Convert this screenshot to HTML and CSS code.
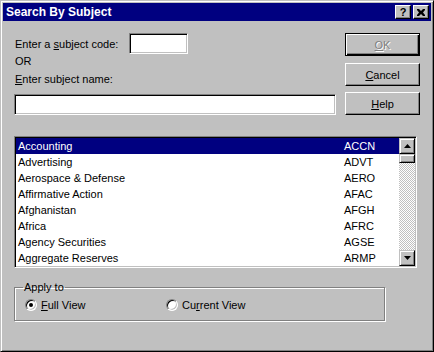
FILE: index.html
```html
<!DOCTYPE html>
<html lang="en">
<head>
    <meta charset="UTF-8">
    <title>Search By Subject</title>
    <link rel="stylesheet" href="styles.css">
</head>
<body>
    <div class="window">
        <div class="titlebar">
            <span class="title">Search By Subject</span>
            <div class="title-buttons">
                <span class="tbtn help-q">?</span>
                <span class="tbtn">
                    <svg width="8" height="7" viewBox="0 0 8 7"><path d="M0 0h2l2 2 2-2h2v1L6 3.5 8 6v1H6L4 5 2 7H0V6l2-2.5L0 1z" fill="#000"/></svg>
                </span>
            </div>
        </div>

        <div class="content">
            <div class="top">
                <div class="fields">
                    <div class="code-row">
                        <span class="code-label">Enter a <u>s</u>ubject code:</span>
                        <div class="input code-input"></div>
                    </div>
                    <div class="or">OR</div>
                    <div class="name-label"><u>E</u>nter subject name:</div>
                    <div class="input name-input"></div>
                </div>
                <div class="buttons">
                    <div class="btn default disabled"><span><u>O</u>K</span></div>
                    <div class="btn cancel"><span><u>C</u>ancel</span></div>
                    <div class="btn help"><span><u>H</u>elp</span></div>
                </div>
            </div>

            <div class="listbox">
                <div class="items">
                    <div class="row selected"><span class="name">Accounting</span><span>ACCN</span></div>
                    <div class="row"><span class="name">Advertising</span><span>ADVT</span></div>
                    <div class="row"><span class="name">Aerospace &amp; Defense</span><span>AERO</span></div>
                    <div class="row"><span class="name">Affirmative Action</span><span>AFAC</span></div>
                    <div class="row"><span class="name">Afghanistan</span><span>AFGH</span></div>
                    <div class="row"><span class="name">Africa</span><span>AFRC</span></div>
                    <div class="row"><span class="name">Agency Securities</span><span>AGSE</span></div>
                    <div class="row"><span class="name">Aggregate Reserves</span><span>ARMP</span></div>
                </div>
                <div class="scrollbar">
                    <div class="sbtn">
                        <svg width="7" height="4" viewBox="0 0 7 4"><path d="M3.5 0L7 4H0z" fill="#000"/></svg>
                    </div>
                    <div class="thumb"></div>
                    <div class="track"></div>
                    <div class="sbtn">
                        <svg width="7" height="4" viewBox="0 0 7 4"><path d="M0 0h7L3.5 4z" fill="#000"/></svg>
                    </div>
                </div>
            </div>

            <fieldset class="group">
                <legend>Apply to</legend>
                <div class="radios">
                    <div class="radio-item full">
                        <span class="radio checked"></span>
                        <span><u>F</u>ull View</span>
                    </div>
                    <div class="radio-item">
                        <span class="radio"></span>
                        <span>Cu<u>r</u>rent View</span>
                    </div>
                </div>
            </fieldset>
        </div>
    </div>
</body>
</html>
```

FILE: styles.css
```css
body {
    margin: 0;
    padding: 0;
    background-color: #c0c0c0;
    font-family: "Liberation Sans", Arial, sans-serif;
    font-size: 11px;
    color: #000;
}
.window {
    box-sizing: border-box;
    width: 434px;
    height: 352px;
    padding: 2px;
    background-color: #c0c0c0;
    border: 1px solid;
    border-color: #c0c0c0 #000 #000 #c0c0c0;
    box-shadow: inset 1px 1px 0 #fff, inset -1px -1px 0 #808080;
}
.titlebar {
    display: flex;
    justify-content: space-between;
    align-items: center;
    height: 18px;
    padding: 0 2px 0 3px;
    background-color: #000080;
}
.title {
    color: #fff;
    font-weight: bold;
    font-size: 12px;
}
.title-buttons {
    display: flex;
    gap: 2px;
}
.tbtn {
    box-sizing: border-box;
    display: flex;
    align-items: center;
    justify-content: center;
    width: 16px;
    height: 14px;
    background-color: #c0c0c0;
    border: 1px solid;
    border-color: #fff #000 #000 #fff;
    box-shadow: inset -1px -1px 0 #808080;
}
.help-q {
    font-weight: bold;
    font-size: 11px;
    line-height: 12px;
}
.content {
    padding: 12px 0 0 11px;
}
.top {
    display: flex;
}
.fields {
    width: 322px;
}
.code-row {
    display: flex;
    align-items: center;
    height: 21px;
}
.code-label {
    width: 114px;
    padding-left: 1px;
}
.input {
    box-sizing: border-box;
    height: 21px;
    background-color: #fff;
    border: 1px solid;
    border-color: #808080 #fff #fff #808080;
    box-shadow: inset 1px 1px 0 #000, inset -1px -1px 0 #c0c0c0;
}
.code-input {
    width: 59px;
}
.or {
    margin-top: 1px;
    padding-left: 1px;
    line-height: 13px;
}
.name-label {
    margin-top: 5px;
    padding-left: 1px;
    line-height: 13px;
}
.name-input {
    margin-top: 8px;
    width: 322px;
}
.buttons {
    margin-left: 9px;
    display: flex;
    flex-direction: column;
}
.btn {
    box-sizing: border-box;
    display: flex;
    align-items: center;
    justify-content: center;
    width: 75px;
    height: 23px;
    border: 1px solid;
    border-color: #fff #000 #000 #fff;
    box-shadow: inset -1px -1px 0 #808080;
}
.btn.default {
    border-color: #000;
    box-shadow: inset 1px 1px 0 #fff, inset -1px -1px 0 #000, inset -2px -2px 0 #808080;
}
.btn.disabled {
    color: #808080;
    text-shadow: 1px 1px 0 #fff;
}
.cancel {
    margin-top: 7px;
}
.help {
    margin-top: 6px;
}
.listbox {
    box-sizing: border-box;
    display: flex;
    margin-top: 21px;
    width: 403px;
    height: 132px;
    background-color: #fff;
    border: 1px solid;
    border-color: #808080 #fff #fff #808080;
    box-shadow: inset 1px 1px 0 #000, inset -1px -1px 0 #c0c0c0;
    padding: 1px;
}
.items {
    flex: 1;
}
.row {
    display: flex;
    height: 16px;
    line-height: 16px;
    padding-left: 2px;
}
.row .name {
    width: 326px;
}
.row.selected {
    background-color: #000080;
    color: #fff;
}
.scrollbar {
    display: flex;
    flex-direction: column;
    width: 16px;
}
.sbtn, .thumb {
    box-sizing: border-box;
    display: flex;
    align-items: center;
    justify-content: center;
    width: 16px;
    height: 16px;
    background-color: #c0c0c0;
    border: 1px solid;
    border-color: #c0c0c0 #000 #000 #c0c0c0;
    box-shadow: inset 1px 1px 0 #fff, inset -1px -1px 0 #808080;
}
.thumb {
    height: 9px;
}
.track {
    flex: 1;
    background-color: #c0c0c0;
    background-image: repeating-conic-gradient(#fff 0 25%, #c0c0c0 0 50%);
    background-size: 2px 2px;
}
.group {
    width: 371px;
    box-sizing: border-box;
    margin: 13px 0 0 0;
    padding: 0 0 9px 8px;
    border: 1px solid #808080;
    box-shadow: inset 1px 1px 0 #fff, 1px 1px 0 #fff;
}
.group legend {
    padding: 0 1px;
    line-height: 13px;
}
.radios {
    display: flex;
    margin-top: 4px;
    margin-left: 2px;
    height: 13px;
    align-items: center;
}
.radio-item {
    display: flex;
    align-items: center;
    gap: 4px;
}
.radio-item.full {
    width: 141px;
}
.radio {
    box-sizing: border-box;
    position: relative;
    width: 12px;
    height: 12px;
    border-radius: 50%;
    background-color: #fff;
    border: 1px solid;
    border-color: #808080 #fff #fff #808080;
    box-shadow: inset 1px 1px 0 #000, inset -1px -1px 0 #c0c0c0;
}
.radio.checked::after {
    content: "";
    position: absolute;
    left: 3px;
    top: 3px;
    width: 4px;
    height: 4px;
    border-radius: 50%;
    background-color: #000;
}
```
